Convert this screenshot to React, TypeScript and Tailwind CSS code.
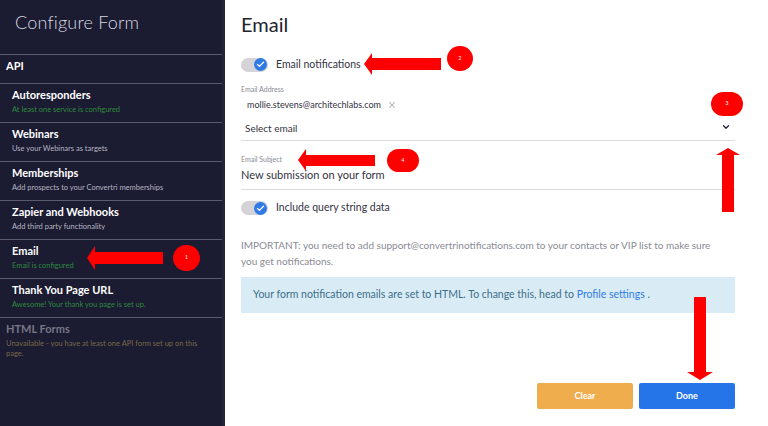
import { Check, ChevronDown, X } from 'lucide-react';

const SECTIONS = [
  { title: 'Autoresponders', desc: 'At least one service is configured', tone: 'ok' },
  { title: 'Webinars', desc: 'Use your Webinars as targets', tone: 'info' },
  { title: 'Memberships', desc: 'Add prospects to your Convertri memberships', tone: 'info' },
  { title: 'Zapier and Webhooks', desc: 'Add third party functionality', tone: 'info' },
  { title: 'Email', desc: 'Email is configured', tone: 'ok' },
  { title: 'Thank You Page URL', desc: 'Awesome! Your thank you page is set up.', tone: 'ok' },
] as const;

function Toggle() {
  return (
    <div className="w-[27px] h-[14px] rounded-full bg-[#d4d4d8] flex items-center justify-end pr-[1px]">
      <div className="w-[13px] h-[13px] rounded-full bg-[#2f7be6] flex items-center justify-center">
        <Check size={9} strokeWidth={3.5} className="text-white" />
      </div>
    </div>
  );
}

function Marker({ n, className }: { n: number; className: string }) {
  return (
    <div className={`absolute rounded-full bg-[#ff0000] flex items-center justify-center text-[5px] text-white ${className}`}>
      {n}
    </div>
  );
}

export default function App() {
  return (
    <div className="relative w-[768px] h-[426px] flex overflow-hidden bg-white font-['Lato',sans-serif]">
      {/* Sidebar */}
      <aside className="w-[225px] shrink-0 bg-[#1b1b32] border-r-[3px] border-[#23233b] flex flex-col">
        <h1 className="h-[55px] pl-[15px] pt-[9px] text-[18px] font-light text-[#d8d8e0] tracking-[0.2px] border-b border-[#5b5b6e]">
          Configure Form
        </h1>
        <div className="h-[29px] pl-[6px] pb-[6px] flex items-center text-[11px] font-bold text-white border-b border-[#5b5b6e]">API</div>
        {SECTIONS.map(s => (
          <div key={s.title} className="h-[39px] pl-[12px] pt-[3px] border-b border-[#5b5b6e]">
            <div className="text-[11px] font-bold text-white leading-[16px]">{s.title}</div>
            <div className={`text-[7.5px] leading-[13px] ${s.tone === 'ok' ? 'text-[#2e8a3e]' : 'text-[#b6b6c2]'}`}>{s.desc}</div>
          </div>
        ))}
        <div className="pl-[6px] pr-[20px] pt-[3px]">
          <div className="text-[11px] font-bold text-[#777787] leading-[16px]">HTML Forms</div>
          <div className="mt-[2px] text-[7.5px] leading-[10px] text-[#7a6a46]">
            Unavailable - you have at least one API form set up on this page.
          </div>
        </div>
      </aside>

      {/* Main */}
      <main className="flex-1 pl-[16px] pr-[33px] flex flex-col text-[#2c2c3a]">
        <h2 className="pt-[10px] text-[20px] leading-[28px] font-normal text-[#23232f]">Email</h2>

        <div className="mt-[19px] flex items-center gap-[8px]">
          <Toggle />
          <span className="text-[10.5px] text-[#33333f]">Email notifications</span>
        </div>

        <div className="mt-[11px] text-[7px] text-[#8a8a94]">Email Address</div>
        <div className="mt-[4px] flex items-center gap-[6px] pl-[6px] text-[9px] text-[#33333f]">
          mollie.stevens@architechlabs.com
          <X size={10} strokeWidth={2.5} className="text-[#b0b0b8]" />
        </div>
        <div className="mt-[5px] h-[24px] flex items-center justify-between pl-[4px] pr-[4px] border-b border-[#dcdce0]">
          <span className="text-[10px] text-[#33333f]">Select email</span>
          <ChevronDown size={10} strokeWidth={3} className="text-[#23233b] mb-[2px]" />
        </div>

        <div className="mt-[13px] text-[7px] text-[#8a8a94]">Email Subject</div>
        <div className="mt-[3px] h-[23px] text-[11px] text-[#33333f] border-b border-[#dcdce0]">New submission on your form</div>

        <div className="mt-[10px] flex items-center gap-[8px]">
          <Toggle />
          <span className="text-[10.5px] text-[#33333f]">Include query string data</span>
        </div>

        <p className="mt-[21px] pr-[20px] text-[10px] leading-[16px] text-[#8a8a94]">
          IMPORTANT: you need to add support@convertrinotifications.com to your contacts or VIP list to make sure you get notifications.
        </p>

        <div className="mt-[8px] h-[36px] bg-[#d9ecf5] flex items-center pl-[12px] text-[10.5px] text-[#3c6e8a]">
          Your form notification emails are set to HTML. To change this, head to&nbsp;
          <span className="text-[#2f7be6]">Profile settings</span>&nbsp;.
        </div>

        <div className="mt-auto mb-[17px] flex justify-end gap-[6px]">
          <button className="w-[96px] h-[26px] rounded-[2px] bg-[#f0ad4e] text-white text-[9px] font-bold">Clear</button>
          <button className="w-[96px] h-[26px] rounded-[2px] bg-[#2575e8] text-white text-[9px] font-bold">Done</button>
        </div>
      </main>

      {/* Annotations */}
      <svg className="absolute inset-0 pointer-events-none" width="768" height="426" viewBox="0 0 768 426">
        <g fill="#ff0000">
          {/* 1: sidebar email */}
          <polygon points="87,258 95,246 95,252 163,252 163,264 95,264 95,270" />
          {/* 2: notifications */}
          <polygon points="364,64 372,53 372,58 441,58 441,70 372,70 372,75" />
          {/* 3: dropdown up */}
          <polygon points="728,148 740,155 734,155 734,212 722,212 722,155 716,155" />
          {/* 4: subject */}
          <polygon points="298,160 306,149 306,155 375,155 375,166 306,166 306,171" />
          {/* done down */}
          <polygon points="700,380 687,372 694,372 694,297 706,297 706,372 713,372" />
        </g>
      </svg>
      <Marker n={1} className="left-[173px] top-[245px] w-[27px] h-[26px]" />
      <Marker n={2} className="left-[447px] top-[46px] w-[26px] h-[25px]" />
      <Marker n={3} className="left-[711px] top-[92px] w-[32px] h-[24px]" />
      <Marker n={4} className="left-[387px] top-[149px] w-[32px] h-[23px]" />
    </div>
  );
}
